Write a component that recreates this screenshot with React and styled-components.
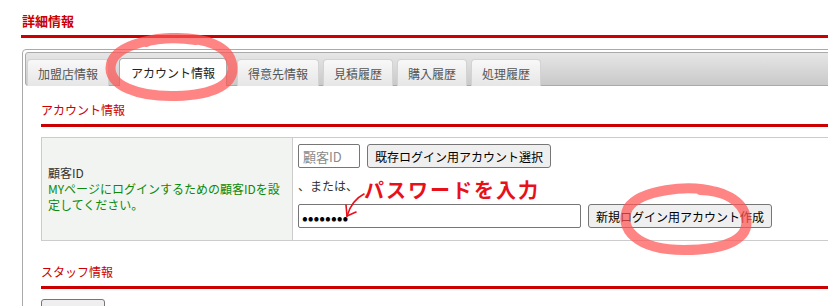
import styled, { createGlobalStyle } from "styled-components";

const GlobalStyle = createGlobalStyle`
  body {
    margin: 0;
    overflow: hidden;
    background: #fff;
    font-family: "Noto Sans CJK JP", "Noto Sans", sans-serif;
    font-size: 12px;
    color: #333;
  }
`;

const tabs = ["加盟店情報", "アカウント情報", "得意先情報", "見積履歴", "購入履歴", "処理履歴"];

const App = () => {
  return (
    <>
      <GlobalStyle />
      <Page>
        <Title>詳細情報</Title>
        <TabsBox>
          <TabBar>
            {tabs.map((t, i) => (
              <Tab key={t} $active={i === 1}>
                {t}
              </Tab>
            ))}
          </TabBar>
          <Panel>
            <Heading>アカウント情報</Heading>
            <Table>
              <tbody>
                <tr>
                  <LabelCell>
                    顧客ID
                    <Hint>MYページにログインするための顧客IDを設定してください。</Hint>
                  </LabelCell>
                  <FieldCell>
                    <FieldStack>
                      <Row>
                        <Input $w={62} placeholder="顧客ID" />
                        <Button>既存ログイン用アカウント選択</Button>
                      </Row>
                      <Or>、または、</Or>
                      <Row>
                        <Password type="password" defaultValue="password" />
                        <Button>新規ログイン用アカウント作成</Button>
                      </Row>
                    </FieldStack>
                  </FieldCell>
                </tr>
              </tbody>
            </Table>
            <Heading $gap={22}>スタッフ情報</Heading>
            <SmallButton>新規登録</SmallButton>
          </Panel>
        </TabsBox>
      </Page>
      <Note>パスワードを入力</Note>
      <Marks width="828" height="306" viewBox="0 0 828 306">
        <g fill="none" stroke="rgba(255,85,85,0.72)" strokeWidth="10" strokeLinecap="round">
          <path d="M196 40 C160 34 116 44 111 64 C106 86 140 97 176 96 C214 95 236 84 232 64 C229 46 205 38 178 38 C160 38 150 40 146 42" />
          <path d="M716 192 C688 184 640 190 628 208 C618 228 636 250 684 250 C728 250 750 238 746 218 C743 200 722 190 700 190" />
        </g>
        <g fill="none" stroke="#e8101a" strokeWidth="1.6" strokeLinecap="round">
          <path d="M364 194 C356 198 350 206 347 216" />
          <path d="M347 216 L346 205" />
          <path d="M347 216 L356 212" />
        </g>
      </Marks>
    </>
  );
};

const Page = styled.div`
  width: 900px;
  padding: 11px 0 0 21px;
`;

const Title = styled.h2`
  margin: 0;
  font-size: 13px;
  font-weight: bold;
  line-height: 20px;
  color: #cc0000;
  padding: 0 0 4px 1px;
  border-bottom: 3px solid #cc0000;
`;

const TabsBox = styled.div`
  margin-top: 11px;
  margin-left: 1px;
  border: 1px solid #aaaaaa;
  border-radius: 4px;
  padding: 2px;
  height: 300px;
`;

const TabBar = styled.div`
  display: flex;
  align-items: flex-end;
  height: 34px;
  box-sizing: border-box;
  padding: 0 0 0 1px;
  border: 1px solid #aaaaaa;
  border-radius: 3px;
  background: linear-gradient(#e6e6e6, #c9c9c9);
`;

const Tab = styled.div`
  display: flex;
  align-items: center;
  box-sizing: border-box;
  height: ${(p) => (p.$active ? 28 : 27)}px;
  margin: 0 ${(p) => (p.$active ? 10 : 4)}px -1px ${(p) => (p.$active ? 6 : 0)}px;
  padding: 0 ${(p) => (p.$active ? 11 : 10)}px;
  border: 1px solid ${(p) => (p.$active ? "#aaaaaa" : "#d3d3d3")};
  border-bottom: none;
  border-radius: 4px 4px 0 0;
  background: ${(p) => (p.$active ? "#ffffff" : "linear-gradient(#f8f8f8, #e6e6e6)")};
  color: ${(p) => (p.$active ? "#222" : "#555")};
  font-size: 12px;
`;

const Panel = styled.div`
  padding: 15px 0 0 16px;
`;

const Heading = styled.h3`
  margin: ${(p) => p.$gap || 0}px 0 0;
  font-size: 12px;
  font-weight: normal;
  line-height: 18px;
  color: #cc0000;
  padding-bottom: 5px;
  border-bottom: 3px solid #cc0000;
`;

const Table = styled.table`
  margin-top: 10px;
  width: 100%;
  border-collapse: collapse;
`;

const LabelCell = styled.td`
  width: 238px;
  height: 102px;
  padding: 0 6px;
  background: #f2f4f2;
  border: 1px solid #cccccc;
  color: #333;
  font-size: 12px;
  line-height: 16px;
  vertical-align: middle;
`;

const Hint = styled.div`
  color: #0a8a0a;
`;

const FieldCell = styled.td`
  padding: 6px 5px;
  border: 1px solid #cccccc;
  vertical-align: top;
`;

const FieldStack = styled.div`
  display: flex;
  flex-direction: column;
  gap: 12px;
`;

const Row = styled.div`
  display: flex;
  align-items: center;
  gap: 7px;
`;

const Input = styled.input`
  box-sizing: border-box;
  width: ${(p) => p.$w}px;
  height: 24px;
  padding: 0 4px;
  border: 1px solid #767676;
  border-radius: 2px;
  font-family: "Noto Sans CJK JP", sans-serif;
  font-size: 13px;
  color: #000;
  &::placeholder {
    color: #8a8a8a;
  }
`;

const Password = styled(Input)`
  width: 283px;
  font-size: 17px;
  padding: 0 3px;
`;

const Button = styled.button`
  box-sizing: border-box;
  height: 24px;
  padding: 0 7px;
  border: 1px solid #767676;
  border-radius: 3px;
  background: #efefef;
  font-family: "Noto Sans CJK JP", sans-serif;
  font-size: 12px;
  color: #000;
`;

const SmallButton = styled(Button)`
  margin-top: 10px;
  width: 64px;
`;

const Or = styled.div`
  height: 12px;
  line-height: 12px;
  font-size: 12px;
  color: #333;
`;

const Note = styled.div`
  position: absolute;
  left: 364px;
  top: 177px;
  font-size: 20px;
  font-weight: bold;
  letter-spacing: 2px;
  color: #e8101a;
  line-height: 26px;
`;

const Marks = styled.svg`
  position: absolute;
  left: 0;
  top: 0;
  pointer-events: none;
`;

export default App;
